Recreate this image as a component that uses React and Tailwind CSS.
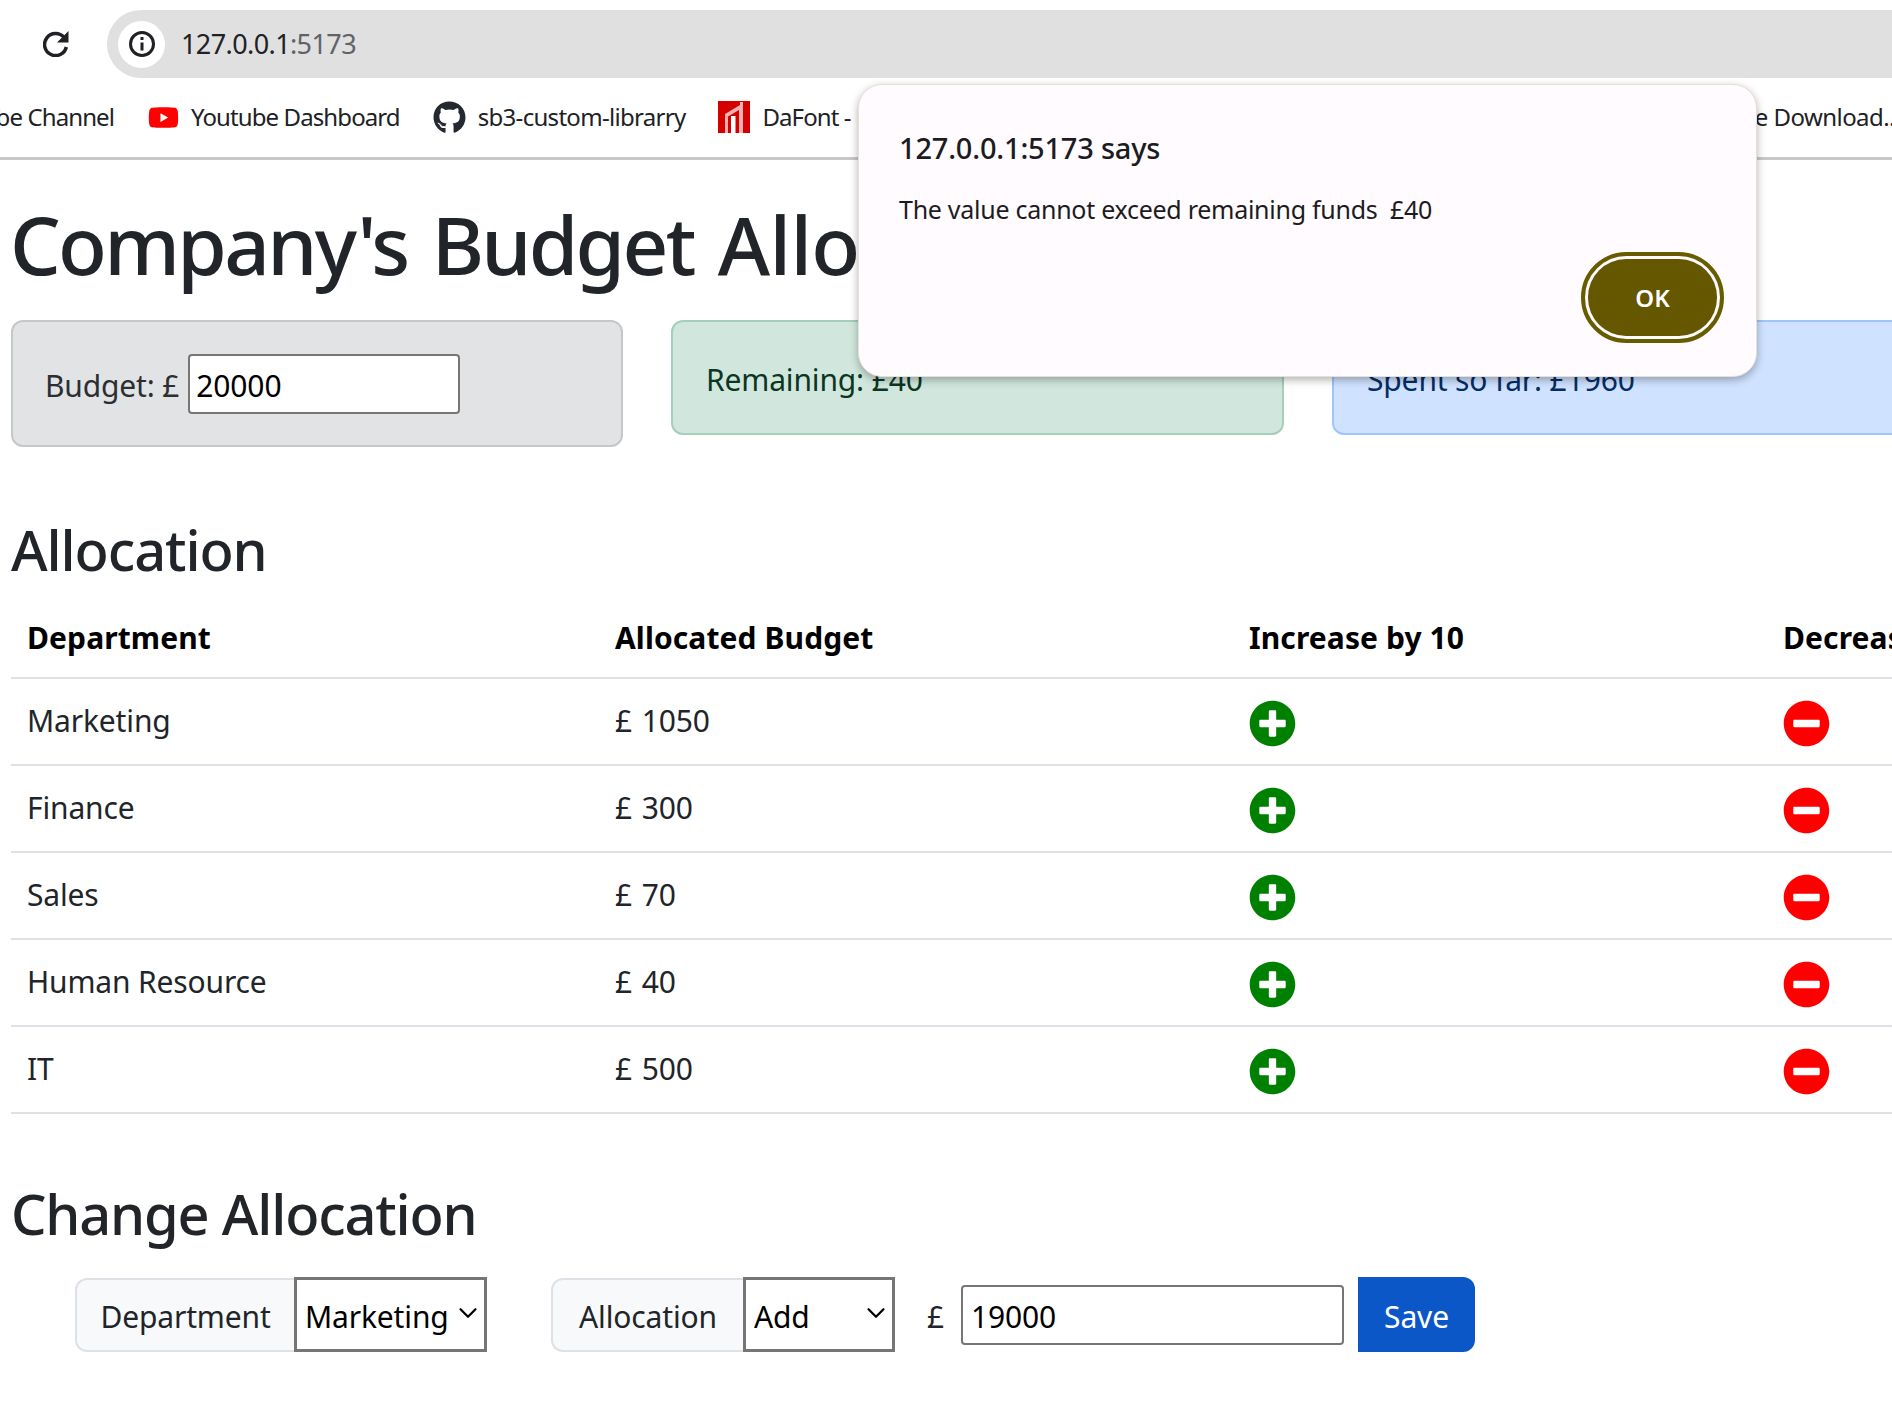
import { ChevronDown } from 'lucide-react';
import { FaGithub, FaYoutube, FaPlusCircle, FaMinusCircle } from 'react-icons/fa';

const font = "font-['Noto_Sans','Open_Sans',sans-serif]";

const departments = [
  { name: 'Marketing', budget: 1050 },
  { name: 'Finance', budget: 300 },
  { name: 'Sales', budget: 70 },
  { name: 'Human Resource', budget: 40 },
  { name: 'IT', budget: 500 },
];

function BrowserBar() {
  return (
    <header className="bg-white border-b-[3px] border-[#c8c8c8] h-[160px] overflow-hidden">
      <div className="flex items-center h-[88px] pt-[10px] pb-[10px]">
        <svg className="w-[26px] h-[26px] ml-[43px] mr-[38px] shrink-0" viewBox="0 0 26 26" fill="none" stroke="#202124" strokeWidth="3.5">
          <path d="M21 6.5A11 11 0 1 0 23.3 16" />
          <path d="M25.5 0V11.5H14Z" fill="#202124" stroke="none" />
        </svg>
        <div className="flex-1 h-[68px] bg-[#e0e0e0] rounded-l-[34px] flex items-center pl-[11px]">
          <div className="w-[47px] h-[47px] bg-white rounded-full flex items-center justify-center">
            <svg className="w-[28px] h-[28px]" viewBox="0 0 28 28" fill="none" stroke="#202124" strokeWidth="3">
              <circle cx="14" cy="14" r="11.5" />
              <path d="M14 12.5v8M14 7v3" />
            </svg>
          </div>
          <span className="ml-[16px] text-[27px] text-[#202124] tracking-[-0.6px]">
            127.0.0.1<span className="text-[#5f6368]">:5173</span>
          </span>
        </div>
      </div>
      <div className="flex items-center h-[58px] text-[24px] text-[#202124] whitespace-nowrap tracking-[-0.9px]">
        <span className="ml-[-96px] w-[210px] text-right shrink-0">Youtube Channel</span>
        <FaYoutube className="ml-[34px] w-[31px] h-[31px] text-[#ff0000] shrink-0" />
        <span className="ml-[12px]">Youtube Dashboard</span>
        <FaGithub className="ml-[33px] w-[33px] h-[33px] text-[#24292f] shrink-0" />
        <span className="ml-[12px] tracking-[-0.7px]">sb3-custom-librarry</span>
        <svg className="ml-[33px] w-[32px] h-[32px] shrink-0" viewBox="0 0 32 32">
          <rect width="32" height="32" fill="#d40000" />
          <path d="M7 32V13L22 4V1H25V32H21V9L10 15.5V32Z" fill="#f3b0b0" />
          <rect x="13" y="15" width="4.5" height="17" fill="#fff" />
        </svg>
        <span className="ml-[12px]">DaFont - Free Fonts</span>
        <span className="ml-auto mr-[-3px] tracking-[-0.55px]">Free Download..</span>
      </div>
    </header>
  );
}

function AlertDialog() {
  return (
    <div className="absolute left-[858px] top-[84px] w-[899px] h-[293px] bg-[#fffbfe] rounded-[24px] border border-[#e6e1d8] shadow-[0_3px_8px_rgba(0,0,0,0.3)] pl-[40px] pr-[32px]">
      <h2 className="text-[29px] font-medium text-[#1c1b1f] mt-[38px] leading-[50px] tracking-[-0.2px]">127.0.0.1:5173 says</h2>
      <p className="text-[25px] text-[#1c1b1f] mt-[18px] leading-[36px] whitespace-pre tracking-[-0.27px]">The value cannot exceed remaining funds  £40</p>
      <div className="flex justify-end mt-[25px]">
        <button className="w-[143px] h-[91px] rounded-[46px] border-[4px] border-[#675c00] p-[3px]">
          <span className="flex items-center justify-center w-full h-full rounded-[38px] bg-[#645700] text-white text-[24px] font-semibold">OK</span>
        </button>
      </div>
    </div>
  );
}

function Allocation() {
  return (
    <table className="table-fixed border-collapse w-[2291px] text-[#212529] text-[30px] tracking-[-0.15px]">
      <colgroup>
        <col className="w-[588px]" />
        <col className="w-[634px]" />
        <col className="w-[534px]" />
        <col className="w-[535px]" />
      </colgroup>
      <thead>
        <tr className="border-b-2 border-[#dee2e6] h-[87px] text-black tracking-[0.1px]">
          <th className="text-left font-bold px-4 pt-[7px]">Department</th>
          <th className="text-left font-bold px-4 pt-[7px]">Allocated Budget</th>
          <th className="text-left font-bold px-4 pt-[7px]">Increase by 10</th>
          <th className="text-left font-bold px-4 pt-[7px]">Decrease by 10</th>
        </tr>
      </thead>
      <tbody>
        {departments.map(d => (
          <tr key={d.name} className="border-b-2 border-[#dee2e6] h-[87px]">
            <td className="px-4 pb-[2px]">{d.name}</td>
            <td className="px-4 pb-[2px] [word-spacing:2px]">£ {d.budget}</td>
            <td className="px-4">
              <FaPlusCircle className="w-[47px] h-[47px] text-[#008000] mt-1" />
            </td>
            <td className="px-4">
              <FaMinusCircle className="w-[47px] h-[47px] text-[#ff0000] mt-1" />
            </td>
          </tr>
        ))}
      </tbody>
    </table>
  );
}

function ChangeForm() {
  return (
    <div className="flex items-center ml-[64px] text-[30px] tracking-[-0.15px]">
      <span className="w-[219px] h-[74px] pt-[3px] flex items-center justify-center bg-[#f8f9fa] border-2 border-r-0 border-[#dee2e6] rounded-l-xl text-[#212529]">Department</span>
      <div className="relative w-[193px] h-[75px]">
        <select defaultValue="Marketing" className="appearance-none w-full h-full border-[3px] border-[#767676] bg-white text-black pl-[8px] pt-[3px]">
          <option>Marketing</option>
        </select>
        <ChevronDown strokeWidth={1.8} className="absolute right-[4px] top-[21px] w-[30px] h-[30px] text-black" />
      </div>
      <span className="ml-[64px] w-[192px] h-[74px] pt-[3px] flex items-center justify-center bg-[#f8f9fa] border-2 border-r-0 border-[#dee2e6] rounded-l-xl text-[#212529]">Allocation</span>
      <div className="relative w-[152px] h-[75px]">
        <select defaultValue="Add" className="appearance-none w-full h-full border-[3px] border-[#767676] bg-white text-black pl-[8px] pt-[3px]">
          <option>Add</option>
        </select>
        <ChevronDown strokeWidth={1.8} className="absolute right-[4px] top-[21px] w-[30px] h-[30px] text-black" />
      </div>
      <span className="ml-[32px] pt-[3px] text-[#212529]">£</span>
      <input defaultValue="19000" className="ml-[17px] w-[383px] h-[60px] border-2 border-[#767676] rounded-[4px] px-[8px] pt-[3px] text-black" />
      <button className="ml-[14px] w-[117px] h-[75px] pt-[3px] bg-[#0b57c8] text-white rounded-r-xl">Save</button>
    </div>
  );
}

export default function App() {
  return (
    <div className={`relative w-[1892px] h-[1420px] overflow-hidden bg-white ${font}`}>
      <BrowserBar />
      <main className="pl-[11px]">
        <h1 className="text-[80px] font-medium text-[#212529] leading-[100px] mt-[34px] mb-[26px] -ml-px whitespace-nowrap tracking-[-2.7px] [word-spacing:6px]">
          Company's Budget <span className="tracking-[-0.7px]">Allocation</span>
        </h1>

        <div className="flex items-start gap-[48px] w-[2000px] text-[30px] tracking-[-0.15px]">
          <div className="w-[612px] h-[127px] bg-[#e2e3e5] border-2 border-[#c4c8cb] rounded-xl flex items-center pl-[32px] text-[#2b2f32]">
            <span className="pt-[3px]">Budget: £</span>
            <input defaultValue="20000" className="ml-[9px] w-[272px] h-[60px] bg-white border-2 border-[#767676] rounded-[4px] px-[6px] pt-[3px] text-black" />
          </div>
          <div className="w-[613px] h-[115px] bg-[#d1e7dd] border-2 border-[#a3cfbb] rounded-xl flex items-center pl-[33px] pt-[3px] text-[#0a3622]">Remaining: £40</div>
          <div className="w-[612px] h-[115px] bg-[#cfe2ff] border-2 border-[#9ec5fe] rounded-xl flex items-center pl-[33px] pt-[3px] text-[#052c65]">Spent so far: £1960</div>
        </div>

        <h2 className="text-[56px] font-medium text-[#212529] leading-[70px] mt-[67px] mb-[7px] tracking-[-1.1px]">Allocation</h2>
        <Allocation />

        <h2 className="text-[56px] font-medium text-[#212529] leading-[70px] mt-[64px] mb-[29px] tracking-[-1.2px]">Change Allocation</h2>
        <ChangeForm />
      </main>
      <AlertDialog />
    </div>
  );
}
